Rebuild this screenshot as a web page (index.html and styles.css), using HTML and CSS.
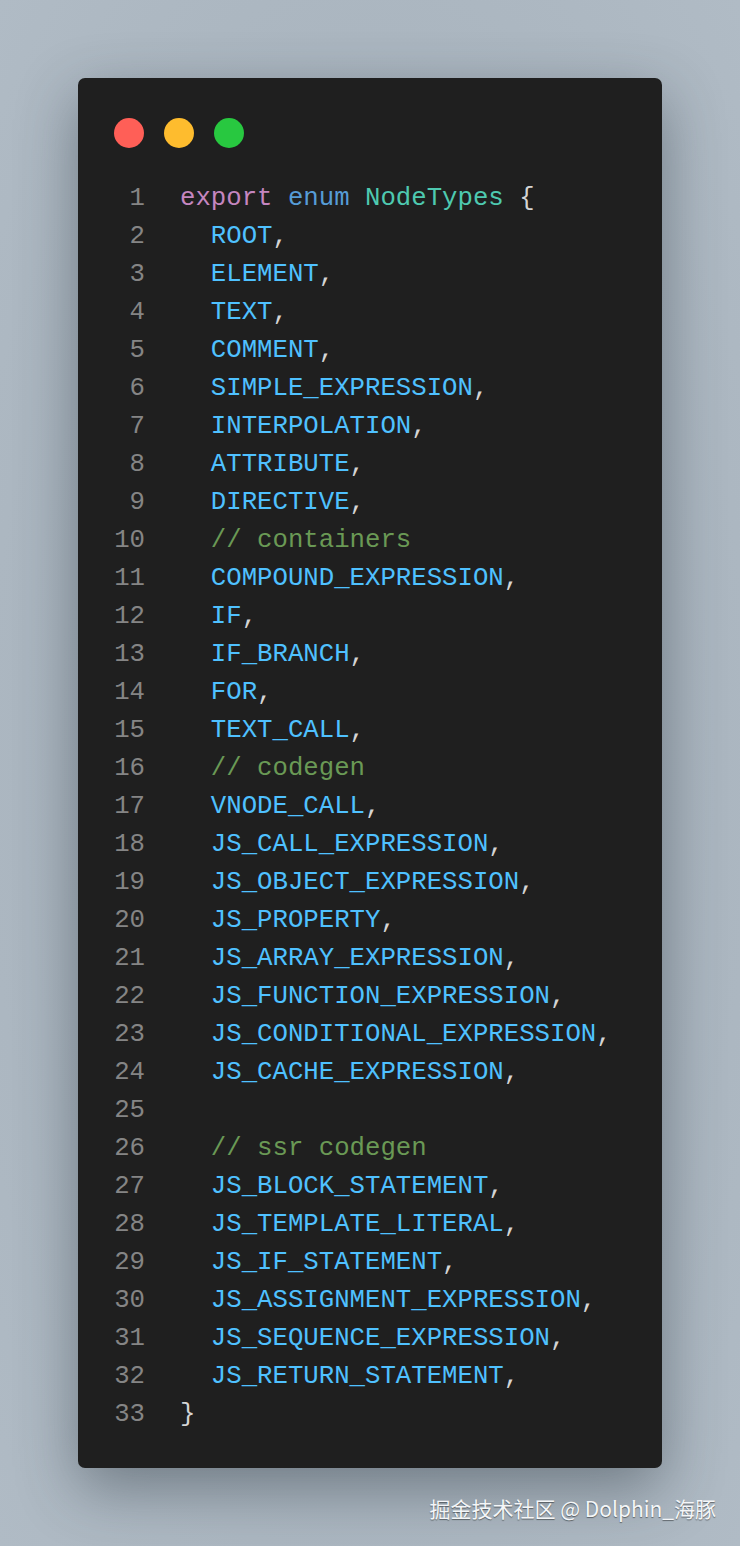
FILE: index.html
```html
<!DOCTYPE html>
<html>
<head>
<meta charset="utf-8">
<link rel="stylesheet" href="styles.css">
</head>
<body>
<div class="page">
  <div class="card">
    <div class="dots">
      <span class="dot red"></span>
      <span class="dot yellow"></span>
      <span class="dot green"></span>
    </div>
    <div class="code">
      <div class="ln">1</div><div class="src"><span class="kw">export</span> <span class="st">enum</span> <span class="ty">NodeTypes</span> <span class="pn">{</span></div>
      <div class="ln">2</div><div class="src">  <span class="c">ROOT</span><span class="pn">,</span></div>
      <div class="ln">3</div><div class="src">  <span class="c">ELEMENT</span><span class="pn">,</span></div>
      <div class="ln">4</div><div class="src">  <span class="c">TEXT</span><span class="pn">,</span></div>
      <div class="ln">5</div><div class="src">  <span class="c">COMMENT</span><span class="pn">,</span></div>
      <div class="ln">6</div><div class="src">  <span class="c">SIMPLE_EXPRESSION</span><span class="pn">,</span></div>
      <div class="ln">7</div><div class="src">  <span class="c">INTERPOLATION</span><span class="pn">,</span></div>
      <div class="ln">8</div><div class="src">  <span class="c">ATTRIBUTE</span><span class="pn">,</span></div>
      <div class="ln">9</div><div class="src">  <span class="c">DIRECTIVE</span><span class="pn">,</span></div>
      <div class="ln">10</div><div class="src">  <span class="cm">// containers</span></div>
      <div class="ln">11</div><div class="src">  <span class="c">COMPOUND_EXPRESSION</span><span class="pn">,</span></div>
      <div class="ln">12</div><div class="src">  <span class="c">IF</span><span class="pn">,</span></div>
      <div class="ln">13</div><div class="src">  <span class="c">IF_BRANCH</span><span class="pn">,</span></div>
      <div class="ln">14</div><div class="src">  <span class="c">FOR</span><span class="pn">,</span></div>
      <div class="ln">15</div><div class="src">  <span class="c">TEXT_CALL</span><span class="pn">,</span></div>
      <div class="ln">16</div><div class="src">  <span class="cm">// codegen</span></div>
      <div class="ln">17</div><div class="src">  <span class="c">VNODE_CALL</span><span class="pn">,</span></div>
      <div class="ln">18</div><div class="src">  <span class="c">JS_CALL_EXPRESSION</span><span class="pn">,</span></div>
      <div class="ln">19</div><div class="src">  <span class="c">JS_OBJECT_EXPRESSION</span><span class="pn">,</span></div>
      <div class="ln">20</div><div class="src">  <span class="c">JS_PROPERTY</span><span class="pn">,</span></div>
      <div class="ln">21</div><div class="src">  <span class="c">JS_ARRAY_EXPRESSION</span><span class="pn">,</span></div>
      <div class="ln">22</div><div class="src">  <span class="c">JS_FUNCTION_EXPRESSION</span><span class="pn">,</span></div>
      <div class="ln">23</div><div class="src">  <span class="c">JS_CONDITIONAL_EXPRESSION</span><span class="pn">,</span></div>
      <div class="ln">24</div><div class="src">  <span class="c">JS_CACHE_EXPRESSION</span><span class="pn">,</span></div>
      <div class="ln">25</div><div class="src"></div>
      <div class="ln">26</div><div class="src">  <span class="cm">// ssr codegen</span></div>
      <div class="ln">27</div><div class="src">  <span class="c">JS_BLOCK_STATEMENT</span><span class="pn">,</span></div>
      <div class="ln">28</div><div class="src">  <span class="c">JS_TEMPLATE_LITERAL</span><span class="pn">,</span></div>
      <div class="ln">29</div><div class="src">  <span class="c">JS_IF_STATEMENT</span><span class="pn">,</span></div>
      <div class="ln">30</div><div class="src">  <span class="c">JS_ASSIGNMENT_EXPRESSION</span><span class="pn">,</span></div>
      <div class="ln">31</div><div class="src">  <span class="c">JS_SEQUENCE_EXPRESSION</span><span class="pn">,</span></div>
      <div class="ln">32</div><div class="src">  <span class="c">JS_RETURN_STATEMENT</span><span class="pn">,</span></div>
      <div class="ln">33</div><div class="src"><span class="pn">}</span></div>
    </div>
  </div>
  <div class="mark">掘金技术社区 @ Dolphin_海豚</div>
</div>
</body>
</html>
```

FILE: styles.css
```css
html, body {
  margin: 0;
  padding: 0;
}
body {
  width: 740px;
  height: 1546px;
  overflow: hidden;
  background: radial-gradient(ellipse at 50% 50%, #a3aeb8 0%, #aab5bf 60%, #b0bbc5 100%);
}
.page {
  padding: 78px 78px 0 78px;
  display: flex;
  flex-direction: column;
}
.card {
  width: 584px;
  height: 1390px;
  box-sizing: border-box;
  background: #1f1f1f;
  border-radius: 7px;
  box-shadow: 0 20px 60px rgba(40, 50, 60, 0.45);
  padding: 40px 0 0 36px;
}
.dots {
  display: flex;
  gap: 20px;
  height: 30px;
}
.dot {
  width: 30px;
  height: 30px;
  border-radius: 50%;
}
.red { background: #ff5f57; }
.yellow { background: #febc2e; }
.green { background: #28c840; }
.code {
  margin-top: 32px;
  display: grid;
  grid-template-columns: 31px 1fr;
  column-gap: 35px;
  font-family: "Liberation Mono", "DejaVu Sans Mono", monospace;
  font-size: 25.7px;
  line-height: 38px;
}
.ln {
  text-align: right;
  color: #858585;
}
.src {
  white-space: pre;
  color: #d4d4d4;
  height: 38px;
}
.kw { color: #c586c0; }
.st { color: #569cd6; }
.ty { color: #4ec9b0; }
.c { color: #4fc1ff; }
.pn { color: #d4d4d4; }
.cm { color: #6a9955; }
.mark {
  align-self: flex-end;
  margin-top: 24px;
  margin-right: -54px;
  font-family: "Noto Sans CJK SC", "Noto Sans", sans-serif;
  font-size: 21px;
  line-height: 32px;
  color: #f4f6f8;
  text-shadow: 0 1px 1px rgba(0, 0, 0, 0.45);
}
```
